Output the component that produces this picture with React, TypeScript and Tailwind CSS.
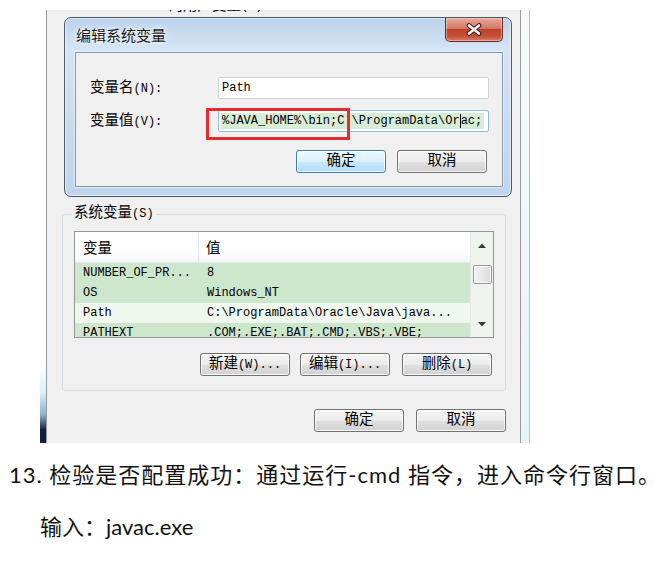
import React from "react";

const CJK = /([\u2E80-\u9FFF\uFF00-\uFFEF\u3000-\u303F]+)/;

function Mx({ text }: { text: string }) {
  const parts = text.split(CJK);
  return (
    <>
      {parts.map((p, i) =>
        p === "" ? null : /[\u2E80-\u9FFF\uFF00-\uFFEF\u3000-\u303F]/.test(p) ? (
          <span key={i} className="text-[14.5px]">
            {p}
          </span>
        ) : (
          <span key={i} className="text-[12px]">
            {p}
          </span>
        )
      )}
    </>
  );
}

function Btn({ label, def }: { label: string; def?: boolean }) {
  return (
    <div
      className={`flex h-[23px] w-[90px] items-center justify-center rounded-[3px] border leading-none text-black font-['Liberation_Mono','Noto_Sans_CJK_SC',monospace] shadow-[inset_0_0_0_1px_rgba(255,255,255,0.85)] ${
        def
          ? "border-[#3c7fb1] bg-[linear-gradient(to_bottom,#eef8fe_0%,#dcf1fc_50%,#c6e8fb_51%,#b3def6_100%)]"
          : "border-[#707070] bg-[linear-gradient(to_bottom,#f4f4f4_0%,#ececec_50%,#dfdfdf_51%,#d2d2d2_100%)]"
      }`}
    >
      <Mx text={label} />
    </div>
  );
}

const rows = [
  { n: "NUMBER_OF_PR...", v: "8", bg: "bg-[#cde7cd]" },
  { n: "OS", v: "Windows_NT", bg: "bg-[#cde7cd]" },
  { n: "Path", v: "C:\\ProgramData\\Oracle\\Java\\java...", bg: "bg-[#eff7ef]" },
  { n: "PATHEXT", v: ".COM;.EXE;.BAT;.CMD;.VBS;.VBE;", bg: "bg-[#cde7cd]" },
];

export default function App() {
  return (
    <div className="h-[566px] w-[659px] overflow-hidden bg-white">
      {/* screenshot of the Windows dialog */}
      <div className="ml-[40px] mt-[10px] flex h-[433px] w-[490px]">
        <div className="flex w-[6px] flex-col">
          <div className="flex-1 bg-white" />
          <div className="h-[30px] bg-linear-to-b from-white to-[#d8f1f9]" />
          <div className="h-[22px] bg-linear-to-b from-[#d8f1f9] to-[#8fb0cc]" />
          <div className="h-[14px] bg-linear-to-b from-[#8fb0cc] to-[#1b2d50]" />
          <div className="h-[14px] bg-[#12213f]" />
        </div>
        <div className="w-[1px] bg-[#9a9a9a]" />
        <div className="flex w-[473px] flex-col bg-[#f0f0f0]">
          {/* clipped text of the window underneath */}
          <div className="relative h-[7px] overflow-hidden">
            <div className="ml-[28px] mt-[-13px] flex items-center whitespace-nowrap leading-[18px] text-black font-['Liberation_Mono','Noto_Sans_CJK_SC',monospace]">
              <Mx text="Administrator 的用户变量(U)" />
            </div>
          </div>

          {/* edit dialog */}
          <div className="ml-[17px] flex h-[180px] w-[448px] flex-col rounded-[7px] border border-[#4d5a69] bg-[linear-gradient(to_bottom,#bcd3eb_0%,#d5e5f5_18%,#cadcef_55%,#bfd5ec_100%)] shadow-[inset_0_0_0_1px_rgba(255,255,255,0.55)]">
            <div className="flex h-[34px] items-start justify-between">
              <div className="pl-[11px] pt-[7px] text-[15px] leading-[20px] text-[#1a1a1a] font-['Noto_Sans_CJK_SC',sans-serif] [text-shadow:0_0_6px_#ffffff,0_0_3px_#ffffff]">
                编辑系统变量
              </div>
              <div className="mr-[8px] flex h-[24px] w-[58px] items-center justify-center rounded-b-[5px] border border-t-0 border-[#6a2a22] bg-[linear-gradient(to_bottom,#e9a99a_0%,#d27a66_45%,#c0412b_50%,#c4503a_80%,#d9826e_100%)] shadow-[inset_0_0_0_1px_rgba(255,220,210,0.5)]">
                <svg width="18" height="13" viewBox="0 0 18 13">
                  <path d="M4 2.5 L14 10.5 M14 2.5 L4 10.5" stroke="#3b1410" strokeWidth="4.6" strokeLinecap="round" />
                  <path d="M4 2.5 L14 10.5 M14 2.5 L4 10.5" stroke="#ffffff" strokeWidth="2.6" strokeLinecap="round" />
                </svg>
              </div>
            </div>
            <div className="ml-[10px] mr-[8px] h-[135px] border border-[#8396ad] bg-[#f0f0f0] pl-[14px] pt-[24px] shadow-[0_0_0_1px_rgba(255,255,255,0.5)]">
              <div className="flex h-[22px] items-center">
                <div className="w-[128px] whitespace-nowrap text-black font-['Liberation_Mono','Noto_Sans_CJK_SC',monospace]">
                  <Mx text="变量名(N):" />
                </div>
                <div className="flex h-[22px] w-[271px] items-center rounded-[2px] border border-[#cdd2d8] bg-white pl-[3px] text-[12px] text-black font-['Liberation_Mono',monospace]">
                  Path
                </div>
              </div>
              <div className="mt-[11px] flex h-[22px] items-center">
                <div className="w-[128px] whitespace-nowrap text-black font-['Liberation_Mono','Noto_Sans_CJK_SC',monospace]">
                  <Mx text="变量值(V):" />
                </div>
                <div className="relative">
                  <div className="flex h-[22px] w-[271px] items-center overflow-hidden whitespace-nowrap rounded-[2px] border border-[#8fbde6] bg-white px-[2px] text-[12px] text-black font-['Liberation_Mono',monospace]">
                    <span className="bg-[#d6edd6] pl-[1px] pr-[2px] leading-[16px]">
                      %JAVA_HOME%\bin;C:\ProgramData\Or
                      <span className="border-l border-black">ac</span>
                      ;
                    </span>
                  </div>
                  <div className="absolute left-[-12px] top-[-2px] h-[32px] w-[144px] border-[3px] border-[#e62b2e]" />
                </div>
              </div>
              <div className="ml-[206px] mt-[18px] flex gap-[11px]">
                <Btn label="确定" def />
                <Btn label="取消" />
              </div>
            </div>
          </div>

          {/* system variables group */}
          <div className="relative ml-[15px] mt-[17px] h-[177px] w-[444px] rounded-[3px] border border-[#d5dfe5]">
            <div className="absolute left-[9px] top-[-11px] bg-[#f0f0f0] px-[2px] leading-[18px] text-black font-['Liberation_Mono','Noto_Sans_CJK_SC',monospace]">
              <Mx text="系统变量(S)" />
            </div>
            <div className="ml-[11px] mt-[16px] flex h-[107px] w-[420px] overflow-hidden border border-[#8f9a93]">
              <div className="flex w-[395px] flex-col">
                <div className="flex h-[31px] shrink-0 border-b border-[#e3e5e8] bg-[linear-gradient(to_bottom,#ffffff_0%,#ffffff_60%,#f5f6f8_100%)] text-black font-['Noto_Sans_CJK_SC',sans-serif] text-[14.5px]">
                  <div className="flex w-[124px] items-center border-r border-[#e3e5e8] pl-[8px]">变量</div>
                  <div className="flex items-center pl-[7px]">值</div>
                </div>
                {rows.map((r) => (
                  <div
                    key={r.n}
                    className={`flex h-[20px] shrink-0 items-center whitespace-nowrap text-[12px] text-black font-['Liberation_Mono',monospace] ${r.bg}`}
                  >
                    <div className="w-[124px] pl-[8px]">{r.n}</div>
                    <div className="pl-[8px]">{r.v}</div>
                  </div>
                ))}
              </div>
              <div className="flex w-[23px] flex-col items-center border-l border-[#e8ece8] bg-[#eef3ee]">
                <div className="flex h-[24px] w-full items-center justify-center pt-[2px]">
                  <svg width="8" height="5" viewBox="0 0 8 5">
                    <path d="M0 5 L4 0.5 L8 5 Z" fill="#3a3a3a" />
                  </svg>
                </div>
                <div className="mt-[9px] h-[19px] w-[19px] rounded-[2px] border border-[#979797] bg-[linear-gradient(to_right,#f3f3f3_0%,#e8e8e8_50%,#d9d9d9_100%)] shadow-[inset_0_0_0_1px_rgba(255,255,255,0.8)]" />
                <div className="flex-1" />
                <div className="flex h-[22px] w-full items-center justify-center pb-[4px]">
                  <svg width="8" height="5" viewBox="0 0 8 5">
                    <path d="M0 0 L8 0 L4 4.5 Z" fill="#3a3a3a" />
                  </svg>
                </div>
              </div>
            </div>
            <div className="ml-[137px] mt-[15px] flex">
              <Btn label="新建(W)..." />
              <div className="ml-[10px]">
                <Btn label="编辑(I)..." />
              </div>
              <div className="ml-[12px]">
                <Btn label="删除(L)" />
              </div>
            </div>
          </div>

          <div className="ml-[267px] mt-[18px] flex gap-[12px]">
            <Btn label="确定" />
            <Btn label="取消" />
          </div>
        </div>
        <div className="w-[1px] bg-[#9a9a9a]" />
        <div className="w-[8px] bg-linear-to-b from-[#f7f9fa] to-[#e6f4f8]" />
        <div className="w-[1px] bg-[#b2c2cc]" />
      </div>

      {/* document text */}
      <div className="mt-[17px] whitespace-nowrap pl-[9px] text-[22px] leading-[30px] tracking-[1px] text-[#111] font-['Lato','Noto_Sans_CJK_SC',sans-serif]">
        13. 检验是否配置成功：通过运行-cmd 指令，进入命令行窗口。
      </div>
      <div className="mt-[22px] whitespace-nowrap pl-[40px] text-[22px] leading-[30px] text-[#111] font-['Lato','Noto_Sans_CJK_SC',sans-serif]">
        输入：javac.exe
      </div>
    </div>
  );
}
